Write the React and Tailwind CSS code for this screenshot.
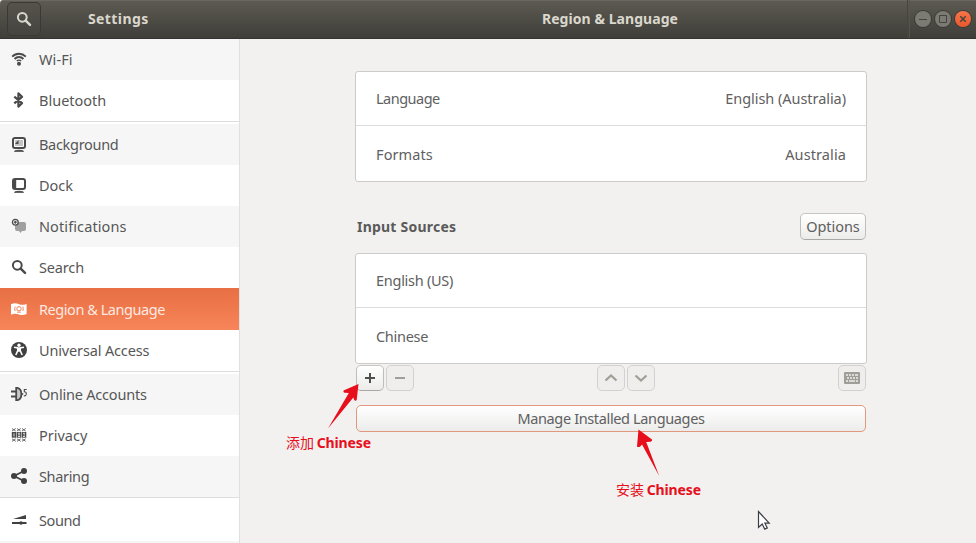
import { useState } from "react";

const INK = "#4a4a4a";

function Magnifier({ color = INK }) {
  return (
    <svg width="16" height="16" viewBox="0 0 16 16" fill="none" stroke={color}>
      <circle cx="6.3" cy="6.3" r="4.4" strokeWidth="2" />
      <path d="M9.700 9.700 14 13.800" strokeWidth="2.500" strokeLinecap="round" />
    </svg>
  );
}

function WifiIcon() {
  return (
    <svg width="16" height="16" viewBox="0 0 16 16" fill="none" stroke={INK} strokeWidth="1.900">
      <path d="M1.200 5.600C5 1.800 11 1.800 14.800 5.600" />
      <path d="M3.600 8C6 5.300 10 5.300 12.400 8" />
      <path d="M5.800 10C7 8.800 9 8.800 10.200 10" strokeWidth="1.400" />
      <circle cx="8" cy="12.800" r="2" fill={INK} stroke="none" />
    </svg>
  );
}

function BluetoothIcon() {
  return (
    <svg width="16" height="16" viewBox="0 0 16 16" fill="none" stroke={INK} strokeWidth="2.200">
      <path d="M3.300 4.600 11 11.200 7.400 14.600V1.400L11 4.800 3.300 11.400" strokeLinejoin="round" />
    </svg>
  );
}

function BackgroundIcon() {
  return (
    <svg width="16" height="16" viewBox="0 0 16 16">
      <rect x="2" y="2" width="12" height="10" rx="2" fill="#fff" stroke={INK} strokeWidth="2" />
      <rect x="4" y="4" width="8" height="6" fill="#c4c4c4" />
      <path d="M7.500 4 4 8h3.500z" fill={INK} />
      <path d="M3.500 15.300C5 13.900 11 13.900 12.500 15.300z" fill={INK} stroke={INK} strokeWidth="1" />
    </svg>
  );
}

function DockIcon() {
  return (
    <svg width="16" height="16" viewBox="0 0 16 16">
      <rect x="2" y="2" width="12" height="10" rx="2" fill="#fff" stroke={INK} strokeWidth="2" />
      <rect x="3" y="3" width="2.200" height="8" fill={INK} />
      <path d="M3.500 15.300C5 13.900 11 13.900 12.500 15.300z" fill={INK} stroke={INK} strokeWidth="1" />
    </svg>
  );
}

function NotificationsIcon() {
  return (
    <svg width="16" height="16" viewBox="0 0 16 16">
      <path d="M6 4h7q2 0 2 2v5q0 2-2 2h-2l-1.500 2L8 13H6q-2 0-2-2V8q2-1 2-4z" fill="#a0a0a0" />
      <circle cx="4.300" cy="4.200" r="2.900" fill="#f6f6f6" stroke={INK} strokeWidth="1.300" />
      <path d="M4.300 2.700v3M2.800 4.200h3" stroke={INK} strokeWidth="1.200" />
    </svg>
  );
}

function RegionIcon() {
  return (
    <svg width="16" height="16" viewBox="0 0 16 16">
      <path d="M0 3.200C3 1.900 5.500 2.200 8 3.200s5 .9 7.600-.5v10.200c-2.600 1.400-5.100 1.400-7.600.6s-5-1-8 .2z" fill="#fff" />
      <g fill="none" stroke="#ef7c53">
        <circle cx="8" cy="7.800" r="2.200" />
        <path d="M4.200 5.600Q3.100 7.800 4.200 10M11.800 5.600Q12.900 7.800 11.800 10" strokeWidth=".9" />
        <path d="M6 11.200h4" strokeWidth=".8" />
      </g>
    </svg>
  );
}

function AccessIcon() {
  return (
    <svg width="16" height="16" viewBox="0 0 16 16">
      <circle cx="8" cy="8" r="8" fill="#404040" />
      <circle cx="8" cy="3.200" r="1.700" fill="#fff" />
      <path d="M3 5.300 6.800 6v2.600L4.800 13M13 5.300 9.200 6v2.600L11.200 13" fill="none" stroke="#fff" strokeWidth="1.600" />
      <path d="M6.200 5.500h3.600v4.200H6.200z" fill="#fff" />
    </svg>
  );
}

function AccountsIcon() {
  return (
    <svg width="16" height="16" viewBox="0 0 16 16" fill="none" stroke={INK}>
      <path d="M5.200 1.800h1.300c5.200 1.500 5.200 10.900 0 12.400H5.200z" fill="#c9c9c9" strokeWidth="1.800" />
      <path d="M0 5.500h5M0 10.500h5" strokeWidth="2" />
      <path d="M10.500 8h1.700" strokeWidth="1.600" />
      <path d="M15.700 3.500h-2.400v2.200q2.200.2 2 2.300t-2.500 1.800" strokeWidth="1.100" />
    </svg>
  );
}

function PrivacyIcon() {
  const columns = [1, 6, 11];
  return (
    <svg width="16" height="16" viewBox="0 0 16 16">
      {columns.map((x) => (
        <g key={x}>
          <path d={`M${x} 1.500l3.700 2.500M${x + 3.7} 1.500l-3.700 2.500M${x} 11.800l3.700 2.500M${x + 3.7} 11.800l-3.700 2.500`} stroke="#6a6a6a" strokeWidth="1" />
          <rect x={x - 0.2} y="5" width="4.500" height="5.700" fill={INK} />
        </g>
      ))}
      <path d="M3 6.300v3.200M7 6.300h2.200M7 7.900h2.200M7 9.500h2.200M12 6.300h2M12.500 7.900h1.500M12 9.500h2" stroke="#fff" strokeWidth=".8" />
    </svg>
  );
}

function SharingIcon() {
  return (
    <svg width="16" height="16" viewBox="0 0 16 16">
      <path d="M13 3 3 8l10 5" fill="none" stroke="#404040" strokeWidth="1.800" />
      <g fill="#404040">
        <circle cx="13" cy="3" r="3" />
        <circle cx="3" cy="8" r="3" />
        <circle cx="13" cy="13" r="3" />
      </g>
    </svg>
  );
}

function SoundIcon() {
  return (
    <svg width="16" height="16" viewBox="0 0 16 16" fill="#404040">
      <path d="M2 6.900 15 3v3.900z" />
      <path d="M1 10h14.500v2H1z" />
      <circle cx="10" cy="11" r="1.800" />
    </svg>
  );
}

const groups = [
  [
    { label: "Wi-Fi", Icon: WifiIcon, tone: "bg-[#f6f6f6]", track: "tracking-[0.1px]" },
    { label: "Bluetooth", Icon: BluetoothIcon, tone: "bg-white", track: "tracking-[0px]" },
  ],
  [
    { label: "Background", Icon: BackgroundIcon, tone: "bg-[#f6f6f6]", track: "tracking-[-0.3px]" },
    { label: "Dock", Icon: DockIcon, tone: "bg-white", track: "tracking-[-0.05px]" },
    { label: "Notifications", Icon: NotificationsIcon, tone: "bg-[#f6f6f6]", track: "tracking-[0.1px]" },
    { label: "Search", Icon: Magnifier, tone: "bg-white", track: "tracking-[-0.15px]" },
    { label: "Region & Language", Icon: RegionIcon, tone: "", track: "tracking-[-0.45px]" },
    { label: "Universal Access", Icon: AccessIcon, tone: "bg-white", track: "tracking-[-0.15px]" },
  ],
  [
    { label: "Online Accounts", Icon: AccountsIcon, tone: "bg-[#f6f6f6]", track: "tracking-[-0.2px]" },
    { label: "Privacy", Icon: PrivacyIcon, tone: "bg-white", track: "tracking-[0px]" },
    { label: "Sharing", Icon: SharingIcon, tone: "bg-[#f6f6f6]", track: "tracking-[-0.35px]" },
  ],
  [{ label: "Sound", Icon: SoundIcon, tone: "bg-white", track: "tracking-[-0.4px]" }],
];

function Sidebar() {
  const [active, setActive] = useState("Region & Language");
  return (
    <nav className="flex h-[504px] w-[240px] shrink-0 flex-col overflow-hidden border-r border-[#e0e0e0] bg-[#f6f6f6]">
      {groups.map((items, i) => (
        <div key={i} className={i ? "border-t border-[#dedede]" : ""}>
          {i > 0 && <div className="h-[2px] bg-white" />}
          {items.map(({ label, Icon, tone, track }) => (
            <button
              key={label}
              onClick={() => setActive(label)}
              className={`flex w-full items-center gap-3 pl-[11px] text-left text-[14.5px] ${track} ${
                label === active
                  ? "h-[42px] bg-linear-to-b from-[#e76f43] to-[#f78559] text-[#fde9e1]"
                  : `h-[41px] text-[#565656] ${tone}`
              }`}
            >
              <span className={label === active ? "" : "mb-px"}>
                <Icon />
              </span>
              <span className={`whitespace-nowrap ${label === active ? "mt-[2px]" : ""}`}>{label}</span>
            </button>
          ))}
        </div>
      ))}
    </nav>
  );
}

function WindowButton({ tone, children }) {
  return (
    <button className={`flex size-4 items-center justify-center rounded-full shadow-[0_0_0_1px_#3c3b36] ${tone}`}>
      <svg width="10" height="10" viewBox="0 0 10 10" fill="none" stroke="#45433e" strokeWidth="1">
        {children}
      </svg>
    </button>
  );
}

function TitleBar() {
  return (
    <header className="flex h-[39px] w-full rounded-tl border-b border-[#35342f] bg-linear-to-b from-[#5d5b52] to-[#3f3e39] text-[14px] font-bold text-[#dad7cd] shadow-[inset_0_1px_0_#6b695f]">
      <div className="flex w-[239px] shrink-0 items-center pl-[7px]">
        <button className="flex h-[34px] w-[34px] items-center justify-center rounded-[5px] border border-[#3a3935] bg-linear-to-b from-[#55534b] to-[#45443f]">
          <Magnifier color="#dad7cd" />
        </button>
        <span className="mb-[2px] ml-[47px] tracking-[0.4px]">Settings</span>
      </div>
      <div className="flex w-[669px] items-center justify-center border-r border-[#47463f]">
        <span className="mr-[4px] mb-[2px] ml-[78px] tracking-[0.06px]">Region &amp; Language</span>
      </div>
      <div className="ml-px flex items-center gap-1 border-l border-[#56544c] pl-[5px]">
        <WindowButton tone="bg-[#7b7a73]"><path d="M1 5.500h8" /></WindowButton>
        <WindowButton tone="bg-[#7b7a73]"><path d="M1.500 1.500h7v7h-7z" /></WindowButton>
        <WindowButton tone="bg-linear-to-b from-[#f8744a] to-[#e8592b]"><path d="m2.300 2.300 5.400 5.400m0-5.400L2.300 7.700" strokeWidth="1.500" /></WindowButton>
      </div>
    </header>
  );
}

function Card({ children }) {
  return (
    <div className="h-[111px] w-[512px] rounded-[3px] border border-[#cdcbc9] bg-white">{children}</div>
  );
}

function Row({ label, value, labelTrack, valueTrack, first }) {
  return (
    <div className={`flex items-center justify-between px-5 ${first ? "h-[54px] border-b border-[#dcdcdc]" : "h-[57px]"}`}>
      <span className={labelTrack}>{label}</span>
      <span className={valueTrack}>{value}</span>
    </div>
  );
}

function ToolButton({ enabled, children }) {
  return (
    <button
      className={`flex h-[26px] w-7 items-center justify-center rounded-[5px] border ${
        enabled
          ? "border-x-[#c0bebb] border-t-[#c8c6c3] border-b-[#a9a7a4] bg-linear-to-b from-white to-[#ececeb]"
          : "border-[#d3d1cf] bg-[#efeeed]"
      }`}
    >
      <svg width="16" height="16" viewBox="0 0 16 16" fill="none" stroke={enabled ? "#4f4f4f" : "#a19e97"} strokeWidth="2">
        {children}
      </svg>
    </button>
  );
}

function RegionPanel() {
  return (
    <main className="flex h-[504px] flex-1 flex-col items-start bg-[#f2f1f0] pt-8 pl-[115px] text-[14.5px] text-[#606060]">
      <Card>
        <Row first label="Language" value="English (Australia)" labelTrack="tracking-[-0.5px]" valueTrack="tracking-[-0.05px]" />
        <Row label="Formats" value="Australia" labelTrack="tracking-[0.1px]" valueTrack="tracking-[0.1px]" />
      </Card>
      <div className="mt-[31px] flex h-[27px] w-[511px] items-center justify-between pl-[2px]">
        <h2 className="text-[14px] font-bold tracking-[0.22px] text-[#5a5a5a]">Input Sources</h2>
        <button className="flex h-[27px] w-[66px] items-center justify-center rounded-[5px] border border-x-[#c0bebb] border-t-[#c8c6c3] border-b-[#a9a7a4] bg-linear-to-b from-white to-[#ececeb] tracking-[-0.05px]">
          Options
        </button>
      </div>
      <div className="mt-[13px]">
        <Card>
          <Row first label="English (US)" labelTrack="tracking-[-0.27px]" />
          <Row label="Chinese" labelTrack="tracking-[-0.3px]" />
        </Card>
      </div>
      <div className="mt-px ml-px flex w-[510px] justify-between">
        <div className="flex gap-[2px]">
          <ToolButton enabled><path d="M8 3v10M3 8h10" /></ToolButton>
          <ToolButton><path d="M3 8h10" /></ToolButton>
        </div>
        <div className="flex gap-[2px]">
          <ToolButton><path d="m2.500 10.500 5.500-5 5.500 5" strokeWidth="2.200" /></ToolButton>
          <ToolButton><path d="m2.500 5.500 5.500 5 5.500-5" strokeWidth="2.200" /></ToolButton>
        </div>
        <ToolButton>
          <rect x="0" y="2" width="16" height="12" rx="1" fill="#a19e97" stroke="none" />
          <path d="M2 5h2M5 5h2M8 5h2M11 5h3M3 8h2M6 8h2M9 8h2M12 8h2M2 11h2M5 11h6M12 11h2" stroke="#efeeed" strokeWidth="1.700" />
        </ToolButton>
      </div>
      <button className="mt-[14px] ml-px flex h-[27px] w-[510px] items-center justify-center rounded-[5px] border border-[#e2987c] bg-linear-to-b from-white to-[#ececeb] tracking-[-0.36px]">
        Manage Installed Languages
      </button>
    </main>
  );
}

function Annotations() {
  return (
    <div className="pointer-events-none absolute inset-0 text-[14px] leading-5 text-[#e60f1b]">
      <svg className="absolute inset-0" width="976" height="543" viewBox="0 0 976 543">
        <path d="M358.500 384 343.500 390.500q-.5 1.800 1 2.200l4.300.3L328 428.500 353.300 397.500l1 2.800q1.500 1 2.400-.3z" fill="#e60f1b" />
        <path d="M638.500 429.500 652 439.500q.5 2-1.500 2.300l-4.300.2 13 34-17.200-31.500-1.700 2q-2 1-3.300 0z" fill="#e60f1b" />
        <path d="M758.500 511.500v16l3.700-3.400 2.500 5 2.600-1.200-2.400-4.700h4.300z" fill="#fff" stroke="#3c3c46" strokeWidth="1.200" />
      </svg>
      <p className="absolute top-[433px] left-[286px] whitespace-nowrap">
        添加 <b className="-ml-px tracking-[-0.1px]">Chinese</b>
      </p>
      <p className="absolute top-[480px] left-[616px] whitespace-nowrap">
        安装 <b className="-ml-px tracking-[-0.1px]">Chinese</b>
      </p>
    </div>
  );
}

export default function App() {
  return (
    <div className="relative h-[543px] w-[976px] overflow-hidden bg-[#f2f1f0] font-['Noto_Sans','Noto_Sans_CJK_SC',sans-serif]">
      <TitleBar />
      <div className="flex">
        <Sidebar />
        <RegionPanel />
      </div>
      <Annotations />
    </div>
  );
}
